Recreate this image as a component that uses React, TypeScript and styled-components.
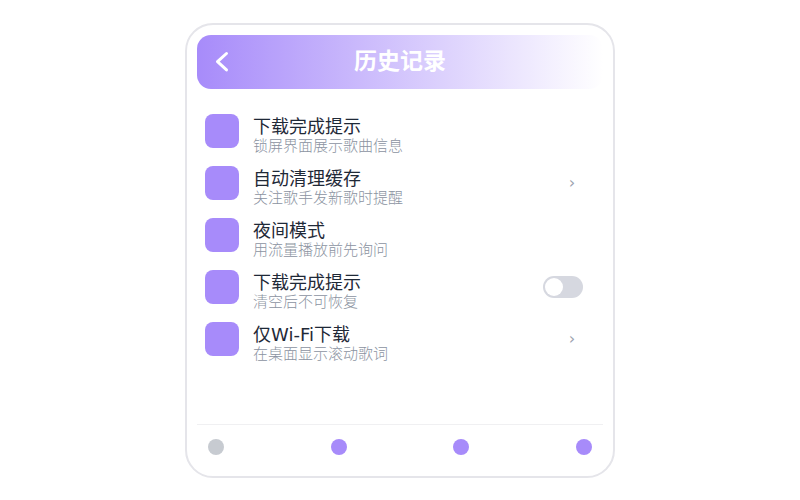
import React from "react";
import styled, { createGlobalStyle } from "styled-components";

const GlobalStyle = createGlobalStyle`
  *, *::before, *::after { box-sizing: border-box; }
  body {
    margin: 0;
    background: #ffffff;
    font-family: "DejaVu Sans", "Noto Sans CJK SC", sans-serif;
  }
`;

const Page = styled.div`
  min-height: 100vh;
  display: flex;
  align-items: center;
  justify-content: center;
  padding: 23px 16px 22px;
`;

const Card = styled.main`
  width: 100%;
  max-width: 430px;
  min-height: calc(100vh - 45px);
  display: flex;
  flex-direction: column;
  padding: 10px 10px 12px;
  border: 2px solid #e5e5ea;
  border-radius: 28px;
  background: #ffffff;
`;

const Header = styled.header`
  display: grid;
  grid-template-columns: 48px 1fr 48px;
  align-items: center;
  height: 54px;
  border-radius: 14px;
  background: linear-gradient(90deg, #a78bfa, #ffffff);
  color: #ffffff;
`;

const BackButton = styled.button`
  display: flex;
  justify-content: center;
  padding: 0;
  border: 0;
  background: none;
  color: inherit;
`;

const Title = styled.h1`
  margin: 0;
  padding-bottom: 2px;
  text-align: center;
  font-size: 23px;
  line-height: 32px;
  font-weight: 700;
`;

const List = styled.ul`
  flex: 1;
  margin: 0;
  padding: 16px 20px 0 8px;
  list-style: none;
`;

const Row = styled.li`
  display: flex;
  align-items: center;
  gap: 14px;
  height: 52px;
`;

const Tile = styled.span`
  width: 34px;
  height: 34px;
  border-radius: 8px;
  background: #a78bfa;
`;

const Copy = styled.div`
  flex: 1;
  padding-top: 10px;
`;

const Name = styled.div`
  font-size: 18px;
  line-height: 20px;
  color: #1f2937;
`;

const Note = styled.div`
  font-size: 15px;
  line-height: 18px;
  font-weight: 300;
  color: #8b93a1;
`;

const OpenButton = styled.button`
  width: 22px;
  padding: 0;
  border: 0;
  background: none;
  color: #9ca3af;
  font: 16px/20px "DejaVu Sans", sans-serif;
`;

const Switch = styled.input`
  appearance: none;
  display: flex;
  align-items: center;
  width: 40px;
  height: 22px;
  margin: 0;
  padding: 2px;
  border-radius: 11px;
  background: #d6d8e0;

  &::before {
    content: "";
    width: 18px;
    height: 18px;
    border-radius: 50%;
    background: #ffffff;
  }

  &:checked {
    justify-content: flex-end;
    background: #a78bfa;
  }
`;

const TabBar = styled.nav`
  display: flex;
  justify-content: space-between;
  align-items: center;
  height: 40px;
  padding: 4px 11px 0;
  border-top: 1px solid #f0f0f2;
`;

const Tab = styled.button<{ $muted?: boolean }>`
  width: 16px;
  height: 16px;
  padding: 0;
  border: 0;
  border-radius: 50%;
  background: ${({ $muted }) => ($muted ? "#c7cbd1" : "#a78bfa")};
`;

type Item = { name: string; note: string; action?: "open" | "switch" };

const items: Item[] = [
  { name: "下载完成提示", note: "锁屏界面展示歌曲信息" },
  { name: "自动清理缓存", note: "关注歌手发新歌时提醒", action: "open" },
  { name: "夜间模式", note: "用流量播放前先询问" },
  { name: "下载完成提示", note: "清空后不可恢复", action: "switch" },
  { name: "仅Wi-Fi下载", note: "在桌面显示滚动歌词", action: "open" },
];

export default function App() {
  return (
    <>
      <GlobalStyle />
      <Page>
        <Card>
          <Header>
            <BackButton aria-label="返回">
              <svg width="24" height="24" viewBox="0 0 24 24" fill="none" stroke="currentColor" strokeWidth="3" strokeLinecap="round" strokeLinejoin="round">
                <path d="m17.5 3.5-9 8.2 9 8.2" />
              </svg>
            </BackButton>
            <Title>历史记录</Title>
          </Header>
          <List>
            {items.map((item, i) => (
              <Row key={i}>
                <Tile />
                <Copy>
                  <Name id={`name-${i}`}>{item.name}</Name>
                  <Note>{item.note}</Note>
                </Copy>
                {item.action === "open" && <OpenButton aria-labelledby={`name-${i}`}>›</OpenButton>}
                {item.action === "switch" && <Switch type="checkbox" role="switch" aria-labelledby={`name-${i}`} />}
              </Row>
            ))}
          </List>
          <TabBar>
            <Tab $muted aria-label="1" />
            <Tab aria-label="2" />
            <Tab aria-label="3" />
            <Tab aria-label="4" />
          </TabBar>
        </Card>
      </Page>
    </>
  );
}
